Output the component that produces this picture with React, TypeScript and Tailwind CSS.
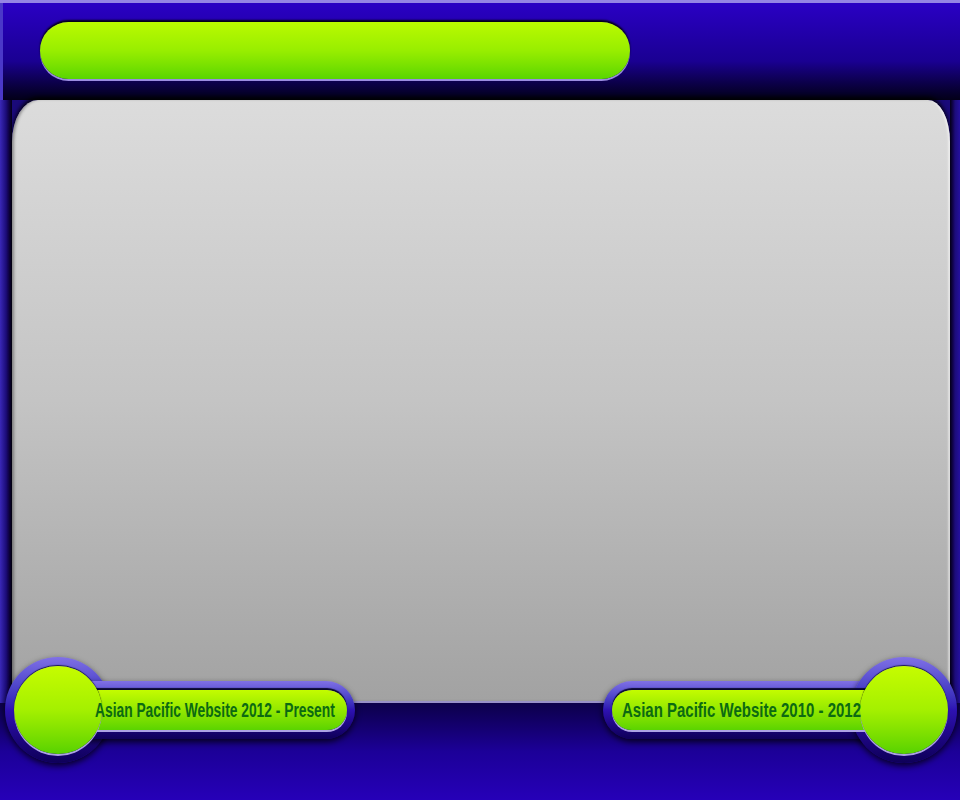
import React from 'react';

const labelFont = { fontFamily: '"Liberation Sans", Arial, sans-serif' };

const ring = 'bg-gradient-to-b from-[#8070e6] via-[#2e12b2] to-[#0e0058] shadow-[0_3px_6px_rgba(0,0,0,0.75)]';
const knob = 'relative z-20 w-[88px] h-[88px] rounded-full bg-gradient-to-b from-[#c6fc00] via-[#a4f000] to-[#56d200] shadow-[0_-1px_1px_rgba(0,0,30,0.8),0_2px_0_#aca2e4]';
const bar = 'relative flex-1 min-w-0 h-[40px] rounded-full flex items-center bg-gradient-to-b from-[#c4fc00] to-[#5ad400] shadow-[0_-2px_1px_rgba(0,0,30,0.9),0_2px_0_#aca2e4]';
const text = 'relative z-30 shrink-0 text-[20px] leading-none font-bold text-[#0c6a12] whitespace-nowrap origin-left';

// knob on the left, label bar running right
function LeftTab({ label }: { label: string }) {
  return (
    <div className="flex items-center">
      <div className={`w-[106px] h-[106px] shrink-0 rounded-full p-[9px] ${ring}`}>
        <div className={knob} />
      </div>
      <div className={`-ml-[61px] w-[305px] h-[58px] shrink-0 rounded-full flex items-center px-[8px] ${ring}`}>
        <div className={`${bar} pl-[37px]`}>
          <span className={`${text} scale-x-[0.69]`} style={labelFont}>
            {label}
          </span>
        </div>
      </div>
    </div>
  );
}

// label bar on the left, knob on the right
function RightTab({ label }: { label: string }) {
  return (
    <div className="flex items-center">
      <div className={`w-[300px] h-[58px] shrink-0 rounded-full flex items-center px-[9px] ${ring}`}>
        <div className={`${bar} pl-[10px]`}>
          <span className={`${text} scale-x-[0.75]`} style={labelFont}>
            {label}
          </span>
        </div>
      </div>
      <div className={`-ml-[52px] w-[106px] h-[106px] shrink-0 rounded-full p-[9px] ${ring}`}>
        <div className={knob} />
      </div>
    </div>
  );
}

export default function App() {
  return (
    <div className="w-[960px] h-[800px] overflow-hidden flex flex-col bg-[#1c0a86] border-t-[3px] border-[#9484e4]">
      {/* header band */}
      <div className="h-[97px] shrink-0 pl-[37px] pt-[19px] bg-gradient-to-b from-[#2a00c4] via-[#1a0092] via-60% to-[#030018] border-l-[3px] border-[#4a38c8]">
        <div className="w-[590px] h-[57px] rounded-full bg-gradient-to-b from-[#bafa00] via-[#98ee00] to-[#58d600] shadow-[0_-2px_2px_rgba(0,0,0,0.9),0_2px_0_#9a8ce0]" />
      </div>

      {/* content panel */}
      <div className="h-[603px] shrink-0 flex bg-[#1a0a7a]">
        <div className="w-[12px] shrink-0 bg-gradient-to-r from-[#3a28b8] via-[#1c0c7a] to-[#040018]" />
        <div className="flex-1 rounded-tl-[26px_42px] rounded-tr-[22px_42px] bg-gradient-to-b from-[#dcdcdc] via-[#c4c4c4] to-[#a2a2a2] border-b-2 border-[#9890c8] shadow-[0_-3px_4px_rgba(0,0,0,0.9),inset_3px_0_3px_-1px_rgba(0,0,0,0.35),inset_-3px_0_2px_-1px_rgba(255,255,255,0.5)]" />
        <div className="w-[10px] shrink-0 bg-gradient-to-r from-[#040018] via-[#1c0c7a] to-[#2410a0]" />
      </div>

      {/* footer band with the two tabs */}
      <div className="flex-1 flex justify-between items-start pl-[5px] pr-[3px] bg-gradient-to-b from-[#0c004a] via-[#1c0098] to-[#2600b8]">
        <div className="-mt-[46px]">
          <LeftTab label="Asian Pacific Website 2012 - Present" />
        </div>
        <div className="-mt-[46px]">
          <RightTab label="Asian Pacific Website 2010 - 2012" />
        </div>
      </div>
    </div>
  );
}
